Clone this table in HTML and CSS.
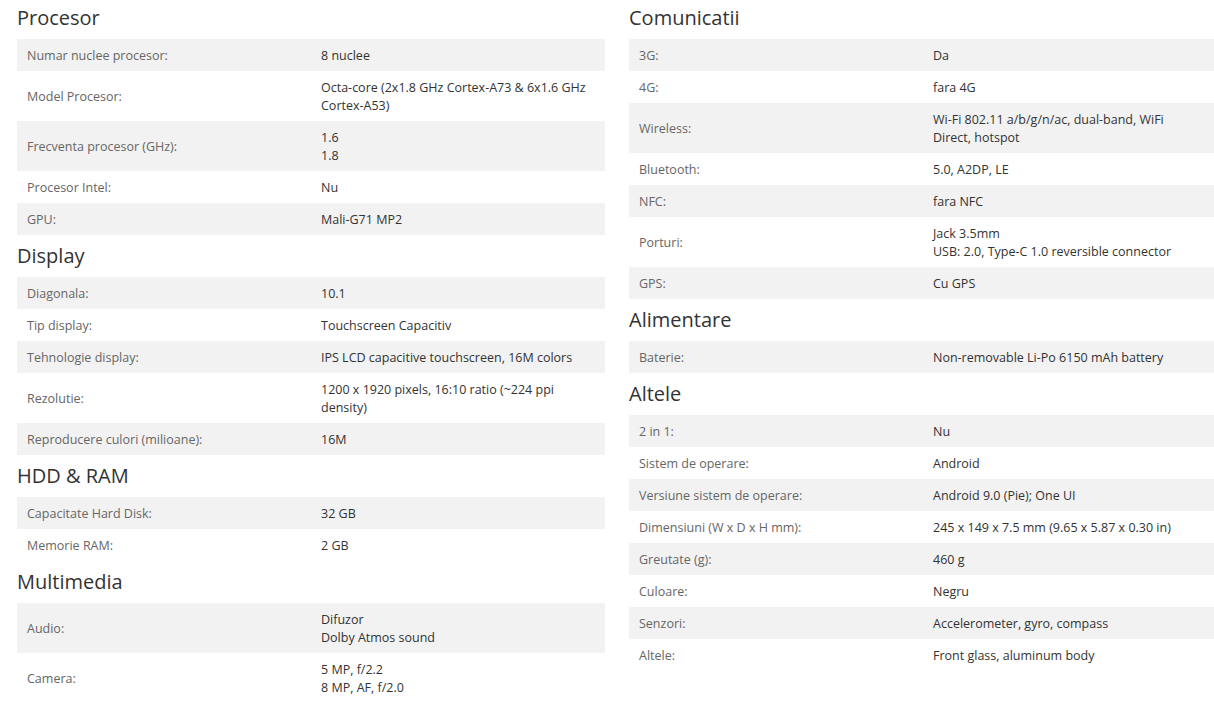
FILE: index.html
```html
<!DOCTYPE html>
<html lang="ro">
<head>
<meta charset="utf-8">
<title>Specificatii</title>
<link rel="stylesheet" href="styles.css">
</head>
<body>
<div class="page">
  <div class="col">
    <section class="sec">
      <h2 class="title">Procesor</h2>
      <div class="row"><div class="lbl">Numar nuclee procesor:</div><div class="val">8 nuclee</div></div>
      <div class="row"><div class="lbl">Model Procesor:</div><div class="val">Octa-core (2x1.8 GHz Cortex-A73 &amp; 6x1.6 GHz Cortex-A53)</div></div>
      <div class="row"><div class="lbl">Frecventa procesor (GHz):</div><div class="val">1.6<br>1.8</div></div>
      <div class="row"><div class="lbl">Procesor Intel:</div><div class="val">Nu</div></div>
      <div class="row"><div class="lbl">GPU:</div><div class="val">Mali-G71 MP2</div></div>
    </section>
    <section class="sec">
      <h2 class="title">Display</h2>
      <div class="row"><div class="lbl">Diagonala:</div><div class="val">10.1</div></div>
      <div class="row"><div class="lbl">Tip display:</div><div class="val">Touchscreen Capacitiv</div></div>
      <div class="row"><div class="lbl">Tehnologie display:</div><div class="val">IPS LCD capacitive touchscreen, 16M colors</div></div>
      <div class="row"><div class="lbl">Rezolutie:</div><div class="val">1200 x 1920 pixels, 16:10 ratio (~224 ppi density)</div></div>
      <div class="row"><div class="lbl">Reproducere culori (milioane):</div><div class="val">16M</div></div>
    </section>
    <section class="sec">
      <h2 class="title">HDD &amp; RAM</h2>
      <div class="row"><div class="lbl">Capacitate Hard Disk:</div><div class="val">32 GB</div></div>
      <div class="row"><div class="lbl">Memorie RAM:</div><div class="val">2 GB</div></div>
    </section>
    <section class="sec">
      <h2 class="title">Multimedia</h2>
      <div class="row"><div class="lbl">Audio:</div><div class="val">Difuzor<br>Dolby Atmos sound</div></div>
      <div class="row"><div class="lbl">Camera:</div><div class="val">5 MP, f/2.2<br>8 MP, AF, f/2.0</div></div>
    </section>
  </div>
  <div class="col">
    <section class="sec">
      <h2 class="title">Comunicatii</h2>
      <div class="row"><div class="lbl">3G:</div><div class="val">Da</div></div>
      <div class="row"><div class="lbl">4G:</div><div class="val">fara 4G</div></div>
      <div class="row"><div class="lbl">Wireless:</div><div class="val">Wi-Fi 802.11 a/b/g/n/ac, dual-band, WiFi<br>Direct, hotspot</div></div>
      <div class="row"><div class="lbl">Bluetooth:</div><div class="val">5.0, A2DP, LE</div></div>
      <div class="row"><div class="lbl">NFC:</div><div class="val">fara NFC</div></div>
      <div class="row"><div class="lbl">Porturi:</div><div class="val">Jack 3.5mm<br>USB: 2.0, Type-C 1.0 reversible connector</div></div>
      <div class="row"><div class="lbl">GPS:</div><div class="val">Cu GPS</div></div>
    </section>
    <section class="sec">
      <h2 class="title">Alimentare</h2>
      <div class="row"><div class="lbl">Baterie:</div><div class="val">Non-removable Li-Po 6150 mAh battery</div></div>
    </section>
    <section class="sec">
      <h2 class="title">Altele</h2>
      <div class="row"><div class="lbl">2 in 1:</div><div class="val">Nu</div></div>
      <div class="row"><div class="lbl">Sistem de operare:</div><div class="val">Android</div></div>
      <div class="row"><div class="lbl">Versiune sistem de operare:</div><div class="val">Android 9.0 (Pie); One UI</div></div>
      <div class="row"><div class="lbl">Dimensiuni (W x D x H mm):</div><div class="val">245 x 149 x 7.5 mm (9.65 x 5.87 x 0.30 in)</div></div>
      <div class="row"><div class="lbl">Greutate (g):</div><div class="val">460 g</div></div>
      <div class="row"><div class="lbl">Culoare:</div><div class="val">Negru</div></div>
      <div class="row"><div class="lbl">Senzori:</div><div class="val">Accelerometer, gyro, compass</div></div>
      <div class="row"><div class="lbl">Altele:</div><div class="val">Front glass, aluminum body</div></div>
    </section>
  </div>
</div>
</body>
</html>
```
FILE: styles.css
```css
html, body {
  margin: 0;
  padding: 0;
  background: #ffffff;
  overflow: hidden;
}
body {
  font-family: "Open Sans", "Noto Sans", "Liberation Sans", sans-serif;
  color: #333333;
}
.page {
  display: flex;
  gap: 24px;
  padding-left: 17px;
}
.col {
  width: 588px;
  flex: 0 0 588px;
  display: flex;
  flex-direction: column;
  gap: 3px;
}
.title {
  margin: 0;
  height: 39px;
  box-sizing: border-box;
  padding-top: 5px;
  font-size: 20px;
  line-height: 26px;
  font-weight: 400;
  color: #333333;
}
.row {
  display: grid;
  grid-template-columns: 1fr 1fr;
  font-size: 12.5px;
  line-height: 18px;
}
.row:nth-of-type(odd) {
  background: #f2f2f2;
}
.lbl, .val {
  padding: 8px 10px 6px;
}
.lbl {
  color: #666666;
  align-self: center;
}
.val {
  color: #333333;
  align-self: center;
}
```
